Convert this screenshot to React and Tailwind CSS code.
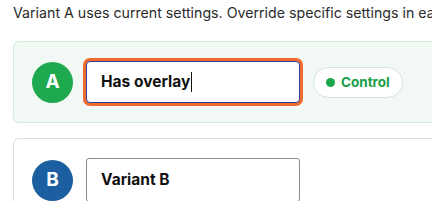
import React from 'react';

const VariantRow = ({ letter, circleClass, cardClass, children, badge }) => (
  <div className={`flex items-center gap-[13px] rounded-md border px-[18px] py-[19px] ${cardClass}`}>
    <div className={`flex h-[41px] w-[41px] shrink-0 items-center justify-center rounded-full text-[19px] font-bold text-white ${circleClass}`}>
      {letter}
    </div>
    {children}
    {badge}
  </div>
);

export default function App() {
  return (
    <div className="h-[201px] w-[432px] overflow-hidden bg-white font-['Inter',sans-serif]">
      <div className="w-[620px] pl-[13px]">
        <p className="pt-[4px] text-[14.2px] leading-[18px] text-[#2a2a2a] whitespace-nowrap">
          Variant A uses current settings. Override specific settings in each variant below.
        </p>

        <div className="mt-[19px] flex flex-col gap-[15px]">
          {/* Variant A */}
          <VariantRow
            letter="A"
            circleClass="bg-[#1fa94f]"
            cardClass="border-[#d3e9dc] bg-[#f2f9f4]"
            badge={
              <span className="flex h-[31px] items-center gap-[6px] rounded-full border border-[#d6e4db] bg-white px-[12px] text-[13.5px] font-bold text-[#1a9e48]">
                <span className="h-[9px] w-[9px] rounded-full bg-[#1aa64b]"></span>
                Control
              </span>
            }
          >
            <div className="flex h-[42px] w-[214px] items-center rounded-[4px] border border-[#2d3fa0] bg-white pl-[14px] text-[15.5px] font-bold text-[#111] ring-[3px] ring-[#ee6a2e]">
              Has overlay
              <span className="ml-[1px] inline-block h-[20px] w-[1px] bg-[#111]"></span>
            </div>
          </VariantRow>

          {/* Variant B */}
          <VariantRow
            letter="B"
            circleClass="bg-[#1c5fa0]"
            cardClass="border-[#dcdcdc] bg-white"
          >
            <div className="flex h-[44px] w-[214px] items-center rounded-[3px] border border-[#8a8a8a] bg-white pl-[14px] text-[15.5px] font-bold text-[#111]">
              Variant B
            </div>
          </VariantRow>
        </div>
      </div>
    </div>
  );
}
